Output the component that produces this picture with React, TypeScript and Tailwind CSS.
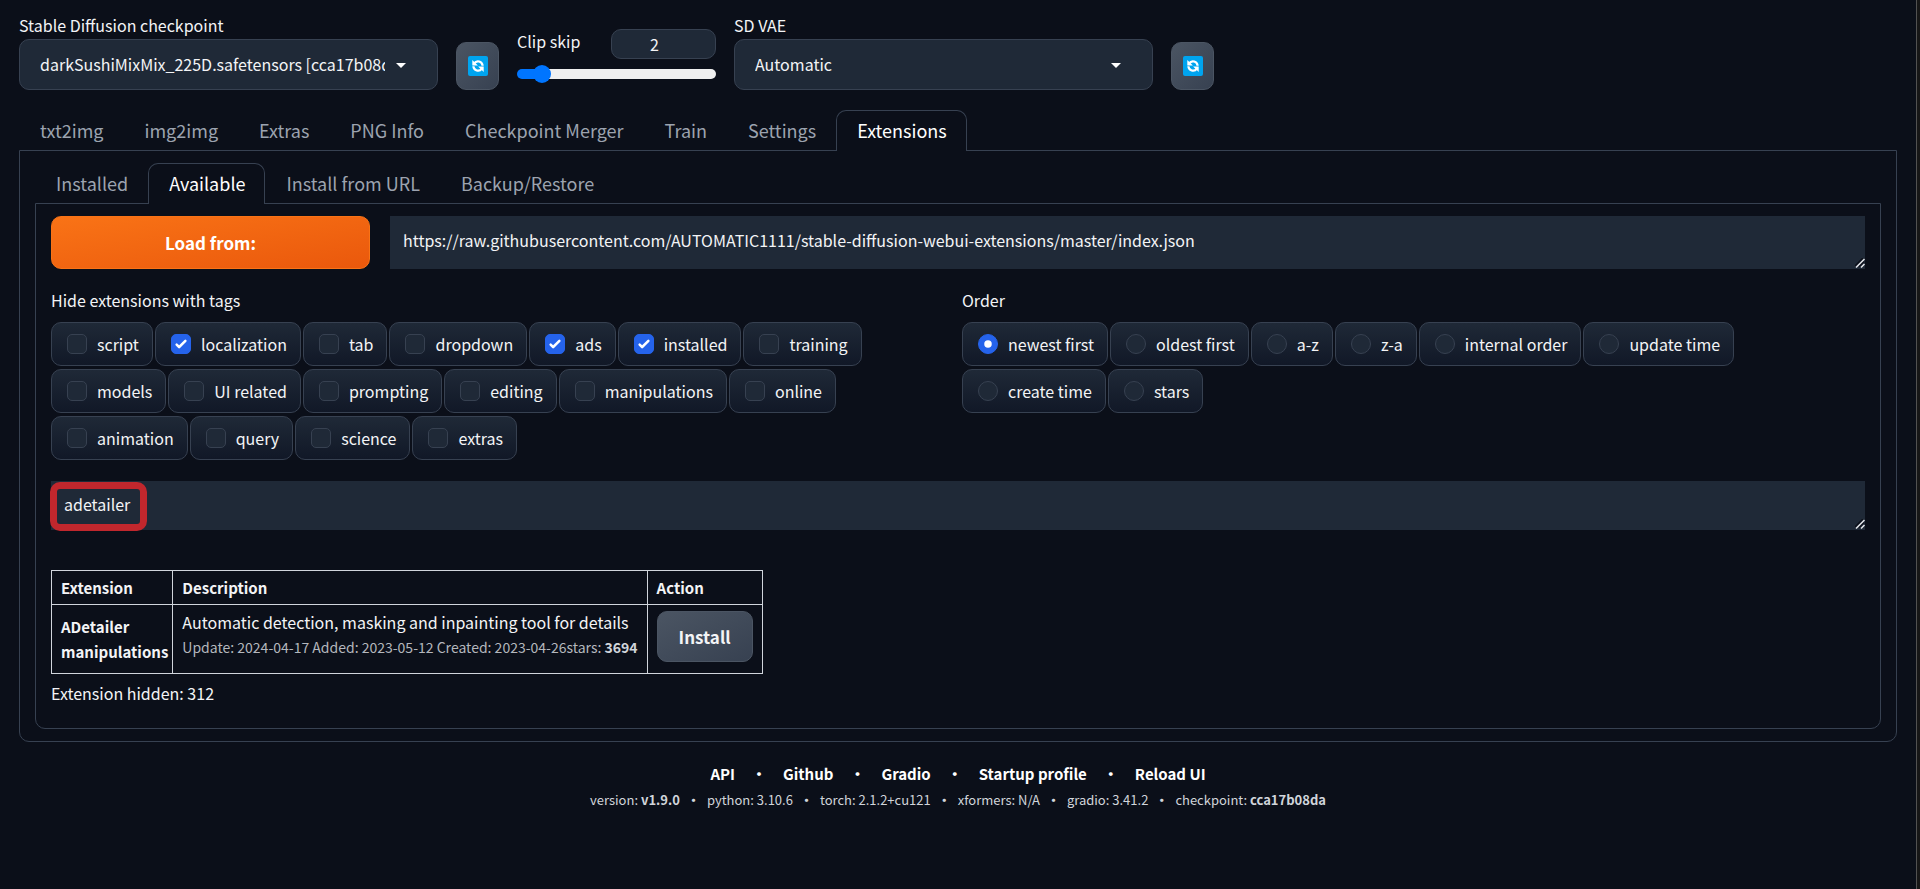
import { useState } from 'react';

const mainTabs = ['txt2img', 'img2img', 'Extras', 'PNG Info', 'Checkpoint Merger', 'Train', 'Settings', 'Extensions'];
const extensionTabs = ['Installed', 'Available', 'Install from URL', 'Backup/Restore'];

const tags = [
  'script', 'localization', 'tab', 'dropdown', 'ads', 'installed', 'training',
  'models', 'UI related', 'prompting', 'editing', 'manipulations', 'online',
  'animation', 'query', 'science', 'extras',
];
const orders = ['newest first', 'oldest first', 'a-z', 'z-a', 'internal order', 'update time', 'create time', 'stars'];

const footerLinks = ['API', 'Github', 'Gradio', 'Startup profile', 'Reload UI'];
const versions = [
  { name: 'version', value: 'v1.9.0', strong: true },
  { name: 'python', value: '3.10.6' },
  { name: 'torch', value: '2.1.2+cu121' },
  { name: 'xformers', value: 'N/A' },
  { name: 'gradio', value: '3.41.2' },
  { name: 'checkpoint', value: 'cca17b08da', strong: true },
];

function Dropdown({ id, label, value }: { id: string; label: string; value: string }) {
  return (
    <div className="w-[419px]">
      <label htmlFor={id} className="block pb-[2px] leading-[23px]">{label}</label>
      <div className="relative">
        <select
          id={id}
          className="block w-full h-[51px] pl-5 pr-[52px] pb-[2px] appearance-none rounded-[10px] border border-[#374151] bg-[#1f2937] overflow-hidden"
        >
          <option>{value}</option>
        </select>
        <svg className="absolute right-8 top-6 pointer-events-none" width="10" height="5" viewBox="0 0 10 5" fill="white">
          <path d="M0 0h10L5 5z" />
        </svg>
      </div>
    </div>
  );
}

function RefreshButton({ label }: { label: string }) {
  return (
    <button
      aria-label={label}
      className="w-[43px] h-12 flex items-center justify-center rounded-[10px] border border-[#4b5563] bg-linear-to-br from-[#4b5563] to-[#374151]"
    >
      <svg width="20" height="20" viewBox="0 0 20 20">
        <rect width="20" height="20" rx="2" fill="#00a4ef" />
        <g fill="none" stroke="white" strokeWidth="2.2">
          <path d="M6.200 7.400A4.600 4.600 0 0 1 14.600 9.800" />
          <path d="M13.800 12.600A4.600 4.600 0 0 1 5.400 10.200" />
        </g>
        <path d="M4.300 4v5.600h5.600z" fill="white" />
        <path d="M15.700 16v-5.600h-5.600z" fill="white" />
      </svg>
    </button>
  );
}

interface TabsProps {
  items: string[];
  active: string;
  onSelect: (tab: string) => void;
}

function Tabs({ items, active, onSelect }: TabsProps) {
  return (
    <div role="tablist" className="flex -mb-px text-lg">
      {items.map((tab) => (
        <button
          key={tab}
          role="tab"
          aria-selected={tab === active}
          onClick={() => onSelect(tab)}
          className={`relative h-[41px] pl-5 pr-[19px] pb-[2px] rounded-t-[10px] border border-b-0 ${
            tab === active ? 'border-[#374151] bg-[#0b0f19] text-white' : 'border-transparent text-[#9ca3af]'
          }`}
        >
          {tab}
        </button>
      ))}
    </div>
  );
}

const chip =
  'flex items-center gap-[10px] h-11 pl-[15px] pr-[13px] rounded-[10px] border border-[#374151] bg-linear-to-b from-[#1f2937] to-[#111827]';

function TagChip({ label, checked, onChange }: { label: string; checked: boolean; onChange: () => void }) {
  return (
    <label className={chip}>
      <span className="relative size-5">
        <input
          type="checkbox"
          checked={checked}
          onChange={onChange}
          className="block size-5 appearance-none rounded-[5px] border border-[#374151] bg-[#1f2937] checked:border-[#2563eb] checked:bg-[#2563eb]"
        />
        {checked && (
          <svg className="absolute inset-0 pointer-events-none" viewBox="0 0 16 16" fill="white">
            <path d="M12.207 4.793a1 1 0 0 1 0 1.414l-5 5a1 1 0 0 1-1.414 0l-2-2a1 1 0 0 1 1.414-1.414L6.500 9.086l4.293-4.293a1 1 0 0 1 1.414 0z" />
          </svg>
        )}
      </span>
      {label}
    </label>
  );
}

function OrderChip({ label, checked, onChange }: { label: string; checked: boolean; onChange: () => void }) {
  return (
    <label className={chip}>
      <span className="relative size-5">
        <input
          type="radio"
          name="order"
          checked={checked}
          onChange={onChange}
          className="block size-5 appearance-none rounded-full border border-[#374151] bg-[#1f2937] checked:border-[#2563eb] checked:bg-[#2563eb]"
        />
        {checked && (
          <svg className="absolute inset-0 pointer-events-none" viewBox="0 0 16 16" fill="white">
            <circle cx="8" cy="8" r="3" />
          </svg>
        )}
      </span>
      {label}
    </label>
  );
}

function ResizeGrip() {
  return (
    <svg className="absolute right-0 bottom-px pointer-events-none" width="10" height="10" viewBox="0 0 10 10" fill="none">
      <path d="M0 8L8 0M4 8.500L9 3.500" stroke="#0b0f19" strokeWidth="1.500" />
      <path d="M1 9.500L9.500 1M6 9.500L9.500 6" stroke="#e5e7eb" strokeWidth="1.500" />
    </svg>
  );
}

const cell = 'border border-gray-300 pl-[9px]';

export default function App() {
  const [mainTab, setMainTab] = useState('Extensions');
  const [extensionTab, setExtensionTab] = useState('Available');
  const [hidden, setHidden] = useState(['localization', 'ads', 'installed']);
  const [order, setOrder] = useState('newest first');
  const [clipSkip, setClipSkip] = useState(2);

  const toggleTag = (tag: string) =>
    setHidden(hidden.includes(tag) ? hidden.filter((t) => t !== tag) : [...hidden, tag]);

  return (
    <div className="flex min-h-screen bg-[#0b0f19] text-[#f3f4f6] text-base font-['Noto_Sans_CJK_SC',sans-serif]">
      <div className="flex-1 min-w-0 px-[19px] pt-[14px]">
        <div className="flex flex-wrap items-end gap-[18px]">
          <Dropdown id="checkpoint" label="Stable Diffusion checkpoint" value="darkSushiMixMix_225D.safetensors [cca17b08da]" />
          <RefreshButton label="Refresh checkpoints" />
          <div className="w-[199px] self-stretch pt-[15px]">
            <div className="flex justify-between">
              <label htmlFor="clip-skip" className="leading-6">Clip skip</label>
              <input
                aria-label="Clip skip value"
                value={clipSkip}
                onChange={(e) => setClipSkip(Number(e.target.value) || 1)}
                className="w-[105px] h-[30px] pr-[18px] text-center rounded-[10px] border border-[#374151] bg-[#1f2937]"
              />
            </div>
            <input
              id="clip-skip"
              type="range"
              min={1}
              max={12}
              value={clipSkip}
              onChange={(e) => setClipSkip(Number(e.target.value))}
              className="block w-full h-[10px] mt-[10px] appearance-none rounded-full bg-[linear-gradient(to_right,#0075ff_13%,#efefef_13%)] [&::-webkit-slider-thumb]:appearance-none [&::-webkit-slider-thumb]:size-[18px] [&::-webkit-slider-thumb]:rounded-full [&::-webkit-slider-thumb]:bg-[#0075ff]"
            />
          </div>
          <Dropdown id="vae" label="SD VAE" value="Automatic" />
          <RefreshButton label="Refresh VAE" />
        </div>

        <main className="mt-5">
          <Tabs items={mainTabs} active={mainTab} onSelect={setMainTab} />
          <div className="px-[15px] py-3 rounded-b-[10px] border border-[#374151]">
            <Tabs items={extensionTabs} active={extensionTab} onSelect={setExtensionTab} />
            <div className="px-[15px] pt-3 pb-[23px] rounded-b-[10px] border border-[#374151]">
              <div className="flex gap-5">
                <button className="w-[319px] h-[53px] rounded-[10px] border border-[#f97316] bg-linear-to-br from-[#f97316] to-[#ea580c] text-[17px] font-bold text-white">
                  Load from:
                </button>
                <div className="relative flex-1">
                  <textarea
                    aria-label="Extension index URL"
                    rows={1}
                    className="block w-full h-[53px] px-[13px] py-3 leading-6 bg-[#1f2937] resize-none overflow-hidden"
                    defaultValue="https://raw.githubusercontent.com/AUTOMATIC1111/stable-diffusion-webui-extensions/master/index.json"
                  />
                  <ResizeGrip />
                </div>
              </div>

              <div className="grid grid-cols-2 gap-2 mt-[19px]">
                <fieldset>
                  <legend className="leading-6 mb-[10px]">Hide extensions with tags</legend>
                  <div className="flex flex-wrap gap-x-[2px] gap-y-[3px]">
                    {tags.map((tag) => (
                      <TagChip key={tag} label={tag} checked={hidden.includes(tag)} onChange={() => toggleTag(tag)} />
                    ))}
                  </div>
                </fieldset>
                <fieldset>
                  <legend className="leading-6 mb-[10px]">Order</legend>
                  <div className="flex flex-wrap gap-x-[2px] gap-y-[3px]">
                    {orders.map((o) => (
                      <OrderChip key={o} label={o} checked={order === o} onChange={() => setOrder(o)} />
                    ))}
                  </div>
                </fieldset>
              </div>

              <div className="relative mt-[21px]">
                <textarea
                  aria-label="Search extensions"
                  rows={1}
                  className="block w-full h-[49px] px-[13px] py-[11px] leading-6 bg-[#1f2937] resize-none overflow-hidden"
                  defaultValue="adetailer"
                />
                <ResizeGrip />
                <div className="absolute -left-px top-px w-[97px] h-[49px] rounded-[10px] border-[7px] border-[#c1272d] pointer-events-none" />
              </div>

              <table className="mt-10 border-collapse leading-[25px]">
                <thead>
                  <tr className="text-left text-[15px]">
                    <th className={`${cell} pr-1 py-1`}>Extension</th>
                    <th className={`${cell} pr-[9px] py-1`}>Description</th>
                    <th className={`${cell} pr-[9px] py-1`}>Action</th>
                  </tr>
                </thead>
                <tbody>
                  <tr>
                    <td className={`${cell} pr-1 text-[15px] font-bold`}>
                      <a href="#adetailer">ADetailer</a>
                      <br />
                      manipulations
                    </td>
                    <td className={`${cell} pr-[9px] pt-[5px] align-top`}>
                      Automatic detection, masking and inpainting tool for details
                      <p className="text-sm leading-6 text-[#b4b7bd]">
                        Update: 2024-04-17 Added: 2023-05-12 Created: 2023-04-26stars: <b className="text-[#d1d5db]">3694</b>
                      </p>
                    </td>
                    <td className={`${cell} pr-[9px] pt-[6px] pb-[11px]`}>
                      <button className="block h-[51px] px-[21px] rounded-[10px] border border-[#4b5563] bg-linear-to-br from-[#4b5563] to-[#374151] text-[17px] font-bold">
                        Install
                      </button>
                    </td>
                  </tr>
                </tbody>
              </table>
              <p className="mt-[7px] leading-6">Extension hidden: 312</p>
            </div>
          </div>
        </main>

        <footer className="mt-5 text-center">
          <nav className="flex justify-center text-[15px] leading-6 font-bold text-white">
            {footerLinks.map((link, i) => (
              <span key={link} className="flex">
                {i > 0 && <span className="w-12">•</span>}
                <a href="#footer">{link}</a>
              </span>
            ))}
          </nav>
          <div className="flex justify-center mt-[2px] text-[13px] leading-6 text-[#d1d5db]">
            {versions.map((v, i) => (
              <span key={v.name} className="flex">
                {i > 0 && <span className="w-[27px] font-bold">•</span>}
                <span>
                  {v.name}: {v.strong ? <b>{v.value}</b> : v.value}
                </span>
              </span>
            ))}
          </div>
        </footer>
      </div>
      <div className="w-1 border-l border-neutral-600 bg-neutral-900" />
    </div>
  );
}
